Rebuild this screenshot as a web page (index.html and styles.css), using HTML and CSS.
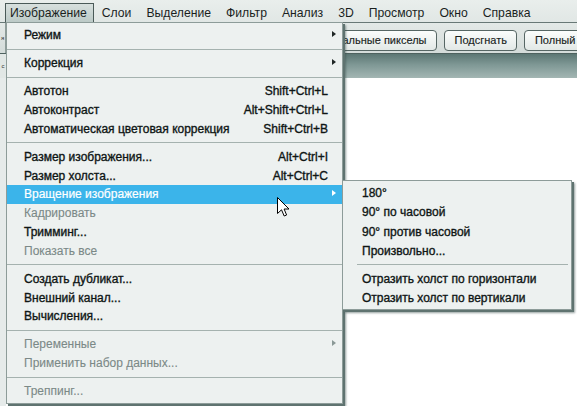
FILE: index.html
```html
<!DOCTYPE html>
<html lang="ru">
<head>
<meta charset="utf-8">
<title>Изображение</title>
<link rel="stylesheet" href="styles.css">
</head>
<body>
<div class="app">
  <nav class="menubar">
    <span class="mb-item active">Изображение</span>
    <span class="mb-item">Слои</span>
    <span class="mb-item">Выделение</span>
    <span class="mb-item">Фильтр</span>
    <span class="mb-item">Анализ</span>
    <span class="mb-item">3D</span>
    <span class="mb-item">Просмотр</span>
    <span class="mb-item">Окно</span>
    <span class="mb-item">Справка</span>
  </nav>

  <div class="options">
    <div class="opt-left"><span>я</span></div>
    <div class="opt-buttons">
      <button class="btn">Реальные пикселы</button>
      <button class="btn">Подсгнать</button>
      <button class="btn btn-wide">Полный</button>
    </div>
  </div>

  <div class="docbar">
    <div class="doc-left"><span>с</span></div>
    <div class="doc-tabs"></div>
  </div>

  <div class="workspace">
    <div class="tools-strip"></div>
    <div class="canvas"></div>
  </div>

  <div class="menu">
    <div class="mi sub">Режим</div>
    <div class="sep"></div>
    <div class="mi sub">Коррекция</div>
    <div class="sep"></div>
    <div class="mi">Автотон<span class="key">Shift+Ctrl+L</span></div>
    <div class="mi">Автоконтраст<span class="key">Alt+Shift+Ctrl+L</span></div>
    <div class="mi">Автоматическая цветовая коррекция<span class="key">Shift+Ctrl+B</span></div>
    <div class="sep"></div>
    <div class="mi">Размер изображения...<span class="key">Alt+Ctrl+I</span></div>
    <div class="mi">Размер холста...<span class="key">Alt+Ctrl+C</span></div>
    <div class="mi sub hl">Вращение изображения</div>
    <div class="mi dis">Кадрировать</div>
    <div class="mi">Тримминг...</div>
    <div class="mi dis">Показать все</div>
    <div class="sep"></div>
    <div class="mi">Создать дубликат...</div>
    <div class="mi">Внешний канал...</div>
    <div class="mi">Вычисления...</div>
    <div class="sep"></div>
    <div class="mi sub dis">Переменные</div>
    <div class="mi dis">Применить набор данных...</div>
    <div class="sep"></div>
    <div class="mi dis">Треппинг...</div>
  </div>

  <div class="submenu">
    <div class="si">180°</div>
    <div class="si">90° по часовой</div>
    <div class="si">90° против часовой</div>
    <div class="si">Произвольно...</div>
    <div class="ssep"></div>
    <div class="si">Отразить холст по горизонтали</div>
    <div class="si">Отразить холст по вертикали</div>
  </div>

  <svg class="cursor" width="14" height="21" viewBox="0 0 14 21">
    <path d="M0.5 0.5 V16.5 L4.5 12.8 L7.2 19 L9.6 18 L7.1 12 L12 12 Z" fill="#fff" stroke="#000" stroke-width="1" stroke-linejoin="miter"/>
  </svg>
</div>
</body>
</html>
```

FILE: styles.css
```css
* { box-sizing: border-box; }

html, body {
  margin: 0;
  padding: 0;
  background: #ffffff;
}

.app {
  position: relative;
  width: 577px;
  height: 406px;
  overflow: hidden;
  display: flex;
  flex-direction: column;
  font-family: "Liberation Sans", Arial, sans-serif;
  color: #111;
}

/* top menu bar */
.menubar {
  flex: none;
  height: 23px;
  display: flex;
  align-items: flex-start;
  padding: 3px 0 0 5px;
  background: linear-gradient(#e9eeec, #e1e7e5);
  border-bottom: 1px solid #687876;
}

.mb-item {
  height: 19px;
  padding: 1px 6px 0 4px;
  margin-right: 3px;
  border: 1px solid transparent;
  border-bottom: none;
  font-size: 12.2px;
  line-height: 16px;
  color: #1a1f1e;
  white-space: nowrap;
}

.mb-item.active {
  border-color: #4a5a58;
  background: linear-gradient(#d7e0de, #bccac7);
}

/* tool options bar */
.options {
  flex: none;
  height: 31px;
  display: flex;
  background: linear-gradient(#e3e9e7, #d4dcda);
  border-bottom: 1px solid #4e625f;
}

.opt-left {
  flex: none;
  width: 6px;
  display: flex;
  justify-content: center;
  align-items: center;
  border-right: 1px solid #8e9c99;
  font-size: 6px;
  color: #333;
}

.opt-buttons {
  display: flex;
  gap: 7px;
  padding: 7px 0 0 313px;
  white-space: nowrap;
}

.btn {
  flex: none;
  height: 21px;
  padding: 0 9.5px;
  border: 1px solid #566664;
  border-radius: 4px;
  background: linear-gradient(#fbfdfc, #e2e8e6);
  font-family: "Liberation Sans", Arial, sans-serif;
  font-size: 11px;
  color: #1a1f1e;
  line-height: 19px;
  text-align: left;
  -webkit-text-stroke: 0.15px currentColor;
}

.btn-wide { padding-right: 34px; }

/* document tab strip */
.docbar {
  flex: none;
  height: 24px;
  display: flex;
}

.doc-left {
  flex: none;
  width: 6px;
  display: flex;
  justify-content: center;
  align-items: center;
  background: #e1e7e5;
  font-size: 6px;
  color: #333;
}

.doc-tabs {
  flex: 1;
  background: linear-gradient(#5c7774, #7f9895 45%, #a3b6b3);
}

.workspace {
  flex: 1;
  display: flex;
}

.tools-strip {
  width: 6px;
  background: #e6ebea;
}

.canvas {
  flex: 1;
  background: #ffffff;
}

/* dropdown menu */
.menu {
  position: absolute;
  left: 6px;
  top: 22px;
  width: 337px;
  padding: 2.6px 0 2.5px;
  background: #edf1f0;
  border: 1px solid #8d9c99;
  box-shadow: 2px 2px 0 #5f7370, 3px 3px 2px rgba(60, 80, 78, 0.55);
}

.mi {
  position: relative;
  height: 18.75px;
  display: flex;
  align-items: center;
  padding: 0 14px 0 17px;
  font-size: 12px;
  color: #0f1615;
  white-space: nowrap;
  -webkit-text-stroke: 0.35px currentColor;
}

.mi .key { margin-left: auto; }

.mi.sub::after {
  content: "";
  position: absolute;
  right: 6px;
  top: 50%;
  margin-top: -4px;
  border-left: 4px solid #1f2625;
  border-top: 3.5px solid transparent;
  border-bottom: 3.5px solid transparent;
}

.mi.hl {
  background: #3bb4ea;
  color: #ffffff;
  -webkit-text-stroke: 0.2px currentColor;
}

.mi.hl::after { border-left-color: #ffffff; }

.mi.dis {
  color: #7b8987;
  -webkit-text-stroke: 0.1px currentColor;
}

.mi.dis::after { border-left-color: #8a9896; }

.sep {
  height: 9.4px;
  display: flex;
  align-items: center;
}

.sep::before {
  content: "";
  flex: 1;
  height: 1px;
  background: #a5b2af;
}

/* rotation submenu */
.submenu {
  position: absolute;
  left: 342px;
  top: 180px;
  width: 230px;
  padding: 2.5px 0 1px;
  background: #edf1f0;
  border: 1px solid #8d9c99;
  box-shadow: 2px 2px 0 #5f7370, 3px 3px 2px rgba(60, 80, 78, 0.55);
}

.si {
  height: 19.3px;
  display: flex;
  align-items: center;
  padding-left: 19px;
  font-size: 12px;
  color: #0f1615;
  white-space: nowrap;
  -webkit-text-stroke: 0.35px currentColor;
}

.ssep {
  height: 8.5px;
  display: flex;
  align-items: center;
  padding: 0 3px 0 14px;
}

.ssep::before {
  content: "";
  flex: 1;
  height: 1px;
  background: #a5b2af;
}

.cursor {
  position: absolute;
  left: 277px;
  top: 197px;
}
```
